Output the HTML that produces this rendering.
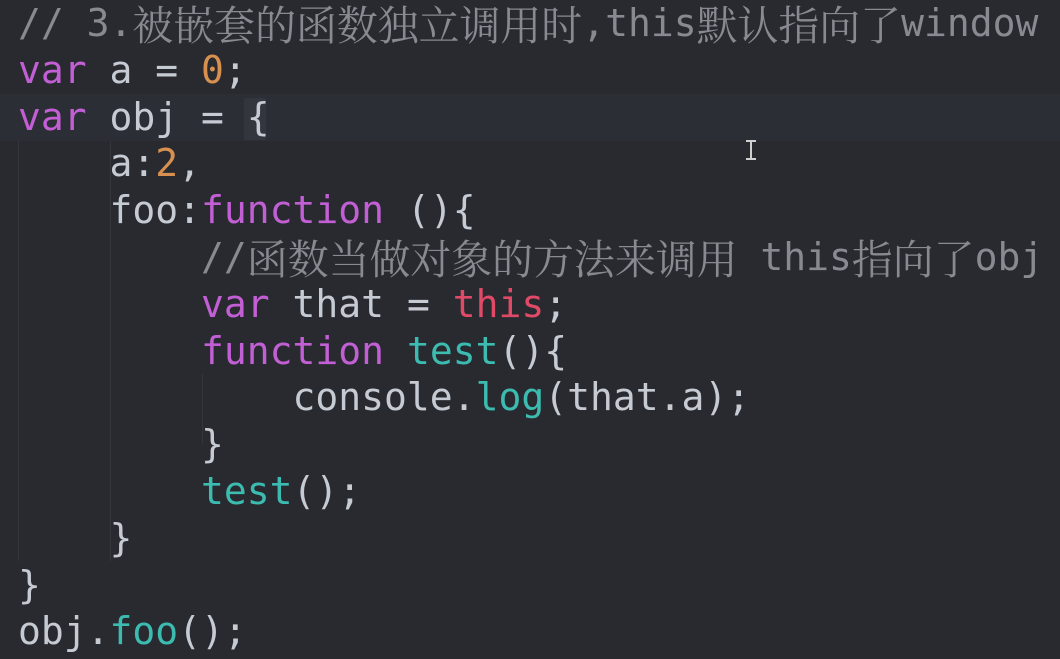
<!DOCTYPE html>
<html><head><meta charset="utf-8"><style>
html,body{margin:0;padding:0;background:#282a30;width:1060px;height:659px;overflow:hidden}
.code{position:absolute;left:18px;top:0px;font-family:"DejaVu Sans Mono","Noto Sans CJK SC",monospace;font-size:38px;color:#c6cad2}
.l{height:46.8px;line-height:46.8px;position:relative;white-space:pre}
.c{color:#878a90}
.z{font-family:"Noto Serif CJK SC","Noto Sans CJK SC",serif;font-size:40.9px;letter-spacing:0;display:inline-block;line-height:46.8px;vertical-align:top}
.k{color:#c25fd4}
.n{color:#d7904f}
.t{color:#e04a67}
.f{color:#3cbcb0}
.hl{position:absolute;left:0;top:94px;width:1060px;height:47px;background:#2c2e35}
.g{position:absolute;width:1px;background:#34363d}
.br{position:absolute;left:244px;top:98px;width:22px;height:42px;background:#33363c;border-radius:2px}
</style></head><body>
<div class="hl"></div>
<div class="br"></div>
<div class="g" style="left:110px;top:141px;height:420px"></div>
<div class="g" style="left:202px;top:374px;height:70px"></div>
<div class="g" style="left:18px;top:141px;height:420px"></div>
<div class="code"><div class="l"><span class="c">// 3.<span class="z">被嵌套的函数独立调用时</span>,this<span class="z">默认指向了</span>window</span></div><div class="l"><span class="k">var</span> a = <span class="n">0</span>;</div><div class="l"><span class="k">var</span> obj = {</div><div class="l">    a:<span class="n">2</span>,</div><div class="l">    foo:<span class="k">function</span> (){</div><div class="l">        <span class="c">//<span class="z">函数当做对象的方法来调用</span> this<span class="z">指向了</span>obj</span></div><div class="l">        <span class="k">var</span> that = <span class="t">this</span>;</div><div class="l">        <span class="k">function</span> <span class="f">test</span>(){</div><div class="l">            console.<span class="f">log</span>(that.a);</div><div class="l">        }</div><div class="l">        <span class="f">test</span>();</div><div class="l">    }</div><div class="l">}</div><div class="l">obj.<span class="f">foo</span>();</div></div>
<svg style="position:absolute;left:744px;top:139px" width="14" height="22"><path d="M2 2h10M7 2v18M2 20h10" stroke="#d0d0d0" stroke-width="2" fill="none"/></svg>
</body></html>
